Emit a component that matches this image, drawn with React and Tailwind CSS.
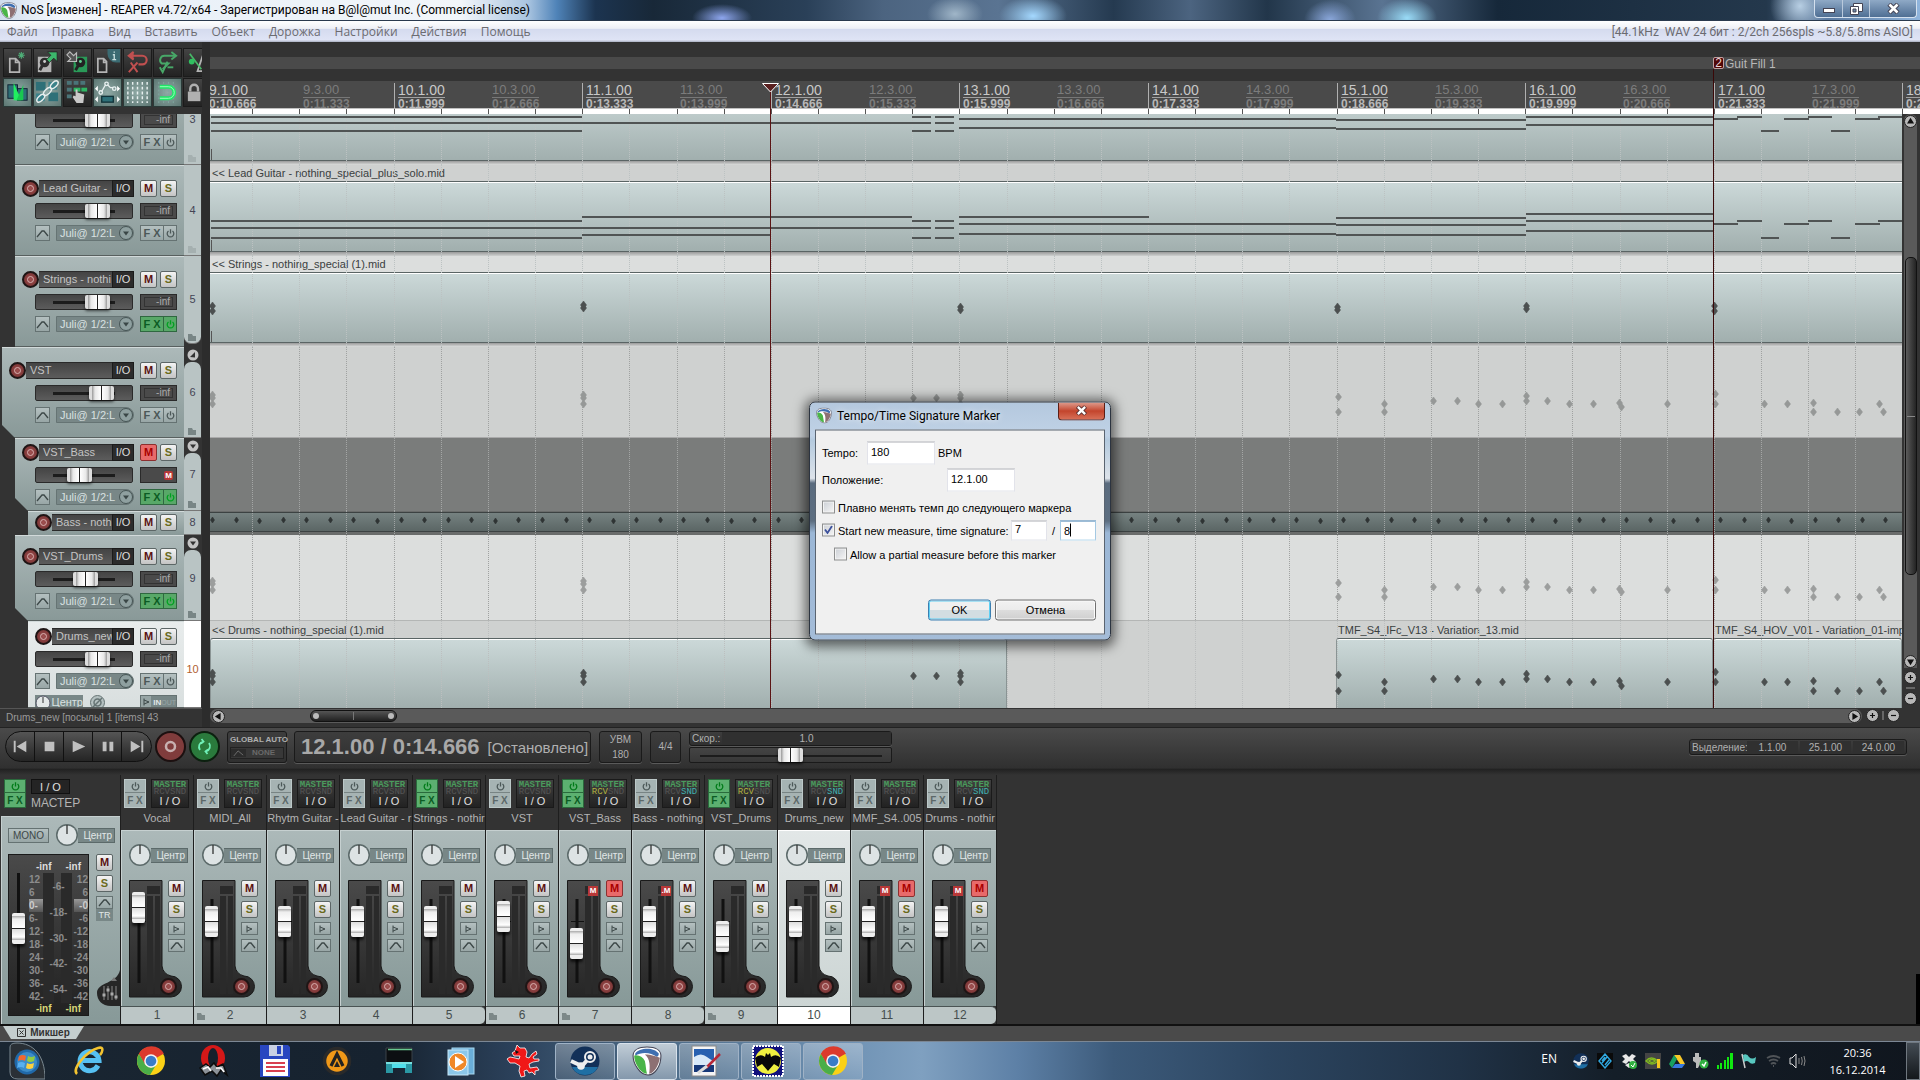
import React from "react";

/* ---------- data ---------- */

const TRACKS = [
  { n: 3, name: "Rhytm Guitar -", h: "h-[54px] -mt-[3px]", pt: "pt-0", level: 2, vol: 69, folder: "dim", headless: true },
  { n: 4, name: "Lead Guitar -", h: "h-[91px]", pt: "pt-[14px]", level: 2, vol: 69, folder: "dim" },
  { n: 5, name: "Strings - nothi", h: "h-[91px]", pt: "pt-[14px]", level: 2, vol: 69, fx: true, folder: "on", last: true },
  { n: 6, name: "VST", h: "h-[91px]", pt: "pt-[14px]", level: 1, vol: 75, folder: "on", arrow: "up", cut: true },
  { n: 7, name: "VST_Bass", h: "h-[73px]", pt: "pt-[5px]", level: 2, vol: 44, fx: true, muted: true, folder: "on", arrow: "down", cut: true },
  { n: 8, name: "Bass - noth", h: "h-[24px]", pt: "pt-[2px]", level: 3, vol: 69, slim: true },
  { n: 9, name: "VST_Drums", h: "h-[86px]", pt: "pt-[12px]", level: 2, vol: 52, fx: true, folder: "on", arrow: "down", cut: true },
  { n: 10, name: "Drums_new", h: "flex-1 min-h-0", pt: "pt-[6px]", level: 3, vol: 69, selected: true, extra: true },
];

const STRIPS = [
  { n: 1, name: "Vocal", v: 86 },
  { n: 2, name: "MIDI_All", v: 70, folder: true },
  { n: 3, name: "Rhytm Guitar -", v: 70 },
  { n: 4, name: "Lead Guitar - r", v: 70 },
  { n: 5, name: "Strings - nothir", v: 70, fx: true, end: true },
  { n: 6, name: "VST", v: 76, folder: true },
  { n: 7, name: "VST_Bass", v: 44, fx: true, rcv: true, folder: true, muted: true, led: "M" },
  { n: 8, name: "Bass - nothing", v: 70, snd: true, end: true, led: ".M" },
  { n: 9, name: "VST_Drums", v: 52, fx: true, rcv: true, folder: true },
  { n: 10, name: "Drums_new", v: 70, snd: true, selected: true },
  { n: 11, name: "MMF_S4..005", v: 70, muted: true, led: "M" },
  { n: 12, name: "Drums - nothir", v: 70, snd: true, muted: true, led: "M", end: true },
];

const MEASURES = [
  ["9", "0:10.666", "0:11.333"],
  ["10", "0:11.999", "0:12.666"],
  ["11", "0:13.333", "0:13.999"],
  ["12", "0:14.666", "0:15.333"],
  ["13", "0:15.999", "0:16.666"],
  ["14", "0:17.333", "0:17.999"],
  ["15", "0:18.666", "0:19.333"],
  ["16", "0:19.999", "0:20.666"],
  ["17", "0:21.333", "0:21.999"],
  ["18", "0:22.666", "0:23.333"],
];

const measureX = (i) => Math.round(i * 188.6 - 5);
const GRID = Array.from({ length: 60 }, (_, i) => Math.round(i * 47.15 - 5) + 0.5).filter((x) => x > 0);

const RIFF = [
  [1503, 1528, "a"], [1527, 1552, "b"], [1551, 1569, "c"], [1574, 1599, "a"],
  [1598, 1622, "b"], [1621, 1640, "c"], [1645, 1670, "a"], [1668, 1693, "b"],
];
const riff = (a, b, c) => RIFF.map(([x1, x2, k]) => [x1, x2, { a, b, c }[k]]);

const NOTES3 = [
  [1, 372, 43], [1, 721, 49], [1, 372, 57],
  [702, 721, 43], [725, 744, 43], [725, 744, 49], [702, 721, 57], [725, 744, 57],
  [749, 1126, 45], [749, 1126, 54], [1126, 1316, 46], [1126, 1316, 55],
  [1316, 1503, 43], [1316, 1503, 51], ...riff(45, 43, 57),
];
const NOTES4 = [
  [1, 372, 56], [1, 721, 63], [1, 372, 73], [372, 702, 52], [372, 560, 70],
  [702, 721, 56], [725, 744, 56], [725, 744, 63], [702, 721, 73], [725, 744, 73],
  [749, 939, 52], [749, 1126, 59], [749, 1126, 69],
  [1126, 1316, 53], [1126, 1316, 60], [1126, 1316, 70],
  [1316, 1503, 49], [1316, 1503, 56], [1316, 1503, 66], ...riff(59, 56, 73),
];
const HITS5 = [[2, 50], [2, 55], [373, 49], [373, 52], [750, 51], [750, 54], [1127, 51], [1127, 54], [1316, 50], [1316, 53], [1504, 50], [1504, 55]];
const DRUMS = [
  [2, 48], [2, 51], [2, 57], [373, 48], [373, 51], [373, 57], [703, 51], [726, 51], [750, 48], [750, 51], [750, 57],
  [1128, 50], [1128, 65], [1174, 57], [1174, 65], [1223, 54], [1247, 54], [1268, 57], [1292, 57],
  [1316, 49], [1316, 54], [1337, 54], [1359, 57], [1383, 57], [1409, 56], [1411, 60], [1457, 57],
  [1505, 47], [1505, 57], [1554, 57], [1577, 57], [1603, 56], [1603, 65], [1627, 65], [1649, 65], [1669, 57], [1673, 65],
];
const drums = (off, k) => DRUMS.map(([x, y]) => [x, Math.round(off + (y - 50) * k)]);
const BASS = Array.from({ length: 72 }, (_, i) => [Math.round(2 + i * 23.57), i % 5 === 2 ? 10 : 9]);

/* ---------- shared control styles ---------- */

const hThumb =
  "appearance-none bg-transparent block w-full h-full cursor-pointer [&::-webkit-slider-thumb]:appearance-none [&::-webkit-slider-thumb]:w-[25px] [&::-webkit-slider-thumb]:h-[14px] [&::-webkit-slider-thumb]:rounded-[2px] [&::-webkit-slider-thumb]:shadow-[0_2px_3px_rgba(0,0,0,0.6)] [&::-webkit-slider-thumb]:bg-[linear-gradient(90deg,#ddd_0,#ddd_3px,#999_3px,#e8e8e8_6px,#fff_12px,#222_12px,#222_13px,#fff_13px,#e8e8e8_19px,#999_22px,#ddd_22px,#ddd_25px)]";
const vThumb =
  "appearance-none bg-transparent block w-[13px] cursor-pointer [writing-mode:vertical-lr] [direction:rtl] [&::-webkit-slider-thumb]:appearance-none [&::-webkit-slider-thumb]:w-[13px] [&::-webkit-slider-thumb]:h-[31px] [&::-webkit-slider-thumb]:rounded-[2px] [&::-webkit-slider-thumb]:shadow-[0_3px_3px_rgba(0,0,0,0.7)] [&::-webkit-slider-thumb]:bg-[linear-gradient(180deg,#eee_0,#eee_3px,#aaa_3px,#eee_6px,#fff_15px,#222_15px,#222_16px,#ddd_16px,#fff_24px,#aaa_27px,#eee_27px,#eee_31px)]";
const msBase = "flex items-center justify-center w-[17px] h-[17px] rounded-[2px] border border-[#5c6666] text-[11px] leading-none font-bold bg-gradient-to-b from-[#f4f4f4] to-[#c4c4c4]";
const grayBtn = "flex items-center justify-center border border-[#657272] bg-gradient-to-b from-[#b4c0c0] to-[#98a6a6] text-[#3d4848]";

function Mute({ on, label }) {
  return (
    <button aria-label={label} className={on ? "flex items-center justify-center w-[17px] h-[17px] rounded-[2px] border border-[#8c3030] text-[11px] leading-none font-bold bg-[#e86a6a] text-[#a80000]" : msBase + " text-[#5a1212]"}>M</button>
  );
}
const Solo = () => <button className={msBase + " text-[#6a6a1c]"}>S</button>;

const Env = () => (
  <svg width="13" height="9" viewBox="0 0 13 9" fill="none" stroke="#3d4848" strokeWidth="1.3"><path d="M1 8L6 2L8 2L12 7" /></svg>
);
const Power = ({ c = "#4c5858" }) => (
  <svg width="9" height="9" viewBox="0 0 9 9" fill="none" stroke={c} strokeWidth="1.3"><path d="M2.5 2A3.3 3.3 0 1 0 6.5 2M4.5 .3V4.5" /></svg>
);
const Folder = ({ c }) => (
  <svg width="8" height="7" viewBox="0 0 8 7"><path d="M0 0H4L5 2H8V7H0Z" fill={c} /></svg>
);

/* ---------- title and menu ---------- */

const ReaperLogo = ({ s = 16 }) => (
  <svg width={s} height={s} viewBox="0 0 28 28">
    <path d="M14 1C22 1 27 4 27 9C27 18 22 27 15 27C7 27 1 16 1 9C1 4 6 1 14 1Z" fill="#fff" stroke="#445" strokeWidth="1" />
    <path d="M3 7C6 2 20 0 25 7C25 9 24 10 23 10C18 6 9 5 3 9Z" fill="#3f6fb0" />
    <path d="M2 9C6 8 10 10 12 14C13 18 13 22 14 26C7 25 2 15 2 9Z" fill="#4ab548" />
    <path d="M12 8C18 8 23 10 26 11C25 18 21 25 16 26C17 19 17 12 12 8Z" fill="#8d7073" />
  </svg>
);

function TitleBar() {
  return (
    <header className="h-[21px] shrink-0 flex items-center pl-0 border-b border-[#2a3a4e] bg-[radial-gradient(ellipse_30px_14px_at_722px_18px,#8ea6ee,transparent),radial-gradient(ellipse_34px_20px_at_1033px_16px,#a4d8ff,transparent),radial-gradient(ellipse_28px_18px_at_955px_14px,#a0b6c8,transparent),radial-gradient(ellipse_26px_20px_at_1330px_20px,#8ba8dc,transparent),radial-gradient(ellipse_30px_20px_at_1407px_18px,#9adcf8,transparent),radial-gradient(ellipse_30px_30px_at_1800px_6px,#b8cfe4,transparent),linear-gradient(90deg,#cfdded_0,#f4f7fb_3%,#eaf1f8_10%,#f2f6fa_24%,#a9c4e0_27.5%,#4f83b8_29%,#1c3450_31%,#182838_34%,#2a4058_42%,#4c6480_46%,#5a7492_52%,#253a50_58%,#4c6480_62%,#22364a_66%,#5a7492_72%,#16283a_78%,#24384c_92%,#5878a0_95%,#8fb4dc_100%)]">
      <ReaperLogo s={17} />
      <h1 className="pl-1 text-[12px] leading-[16px] text-black whitespace-nowrap font-['Roboto',sans-serif]">NoS [изменен] - REAPER v4.72/x64 - Зарегистрирован на B@l@mut Inc. (Commercial license)</h1>
      <div className="ml-auto mr-[3px] flex h-[18px] self-start rounded-b-[4px] border border-t-0 border-[#d4e0ee] overflow-hidden bg-gradient-to-b from-[#8fa9c6] to-[#4f6f94]">
        <button aria-label="Свернуть" className="w-[28px] flex items-end justify-center pb-1 border-r border-[#b9c9dc]"><span className="block w-[12px] h-[5px] bg-white border border-[#445]" /></button>
        <button aria-label="Восстановить" className="w-[27px] flex items-center justify-center border-r border-[#b9c9dc]">
          <svg width="13" height="12" viewBox="0 0 13 12" fill="#fff" stroke="#445" strokeWidth="1"><path d="M3.5 .5H12.500V8.500H3.500Z" /><path d="M.5 3.500H8.500V11.500H.5Z" /><path d="M3 6H6V9H3Z" fill="#6d89ab" /></svg>
        </button>
        <button aria-label="Закрыть" className="w-[46px] flex items-center justify-center">
          <svg width="13" height="11" viewBox="0 0 13 11"><path d="M2 1L11 10M11 1L2 10" stroke="#445" strokeWidth="4.600" /><path d="M2.500 1.500L10.500 9.500M10.500 1.500L2.500 9.500" stroke="#fff" strokeWidth="2.600" /></svg>
        </button>
      </div>
    </header>
  );
}

function MenuBar() {
  return (
    <nav className="h-[21px] shrink-0 flex items-center justify-between pl-[7px] pr-[7px] text-[12px] text-[#6b6b70] bg-[linear-gradient(180deg,#fff_0,#eef0f6_35%,#d5dbef_40%,#dfe4f5_90%,#a8aebf_100%)] font-['Open_Sans',sans-serif]">
      <div className="flex gap-[14px]">
        {["Файл", "Правка", "Вид", "Вставить", "Объект", "Дорожка", "Настройки", "Действия", "Помощь"].map((m) => (
          <button key={m} className="leading-[16px]">{m}</button>
        ))}
      </div>
      <span className="whitespace-pre leading-[16px] font-['Roboto',sans-serif]">[44.1kHz  WAV 24 бит : 2/2ch 256spls ~5.8/5.8ms ASIO]</span>
    </nav>
  );
}

/* ---------- toolbar ---------- */

const TOOLS = [
  { label: "Новый проект", art: <g fill="none" strokeWidth="1.8"><path d="M6 10H12L16 14V24H6ZM12 10V14H16" stroke="#b4b4b4" /><path d="M18 3V10M14.500 6.500H21.500M15.500 4L20.500 9M20.500 4L15.500 9" stroke="#4fae78" strokeWidth="1.2" /></g> },
  { label: "Открыть проект", art: <g fill="none"><rect x="4" y="8" width="14" height="16" fill="#b4b4b4" /><circle cx="11" cy="14" r="5" fill="#2d2d2d" /><path d="M11 13L6 22" stroke="#2d2d2d" strokeWidth="3" /><circle cx="11" cy="13" r="1.500" fill="#ccc" /><path d="M14 3H24V13L20.500 9.500L16 14L13 11L17.500 6.500Z" fill="#3cb86c" stroke="#222" strokeWidth=".8" /></g> },
  { label: "Сохранить проект", art: <g fill="none"><rect x="10" y="8" width="14" height="16" fill="#2a9a58" /><circle cx="17" cy="14" r="5" fill="#222" /><path d="M17 13L12 22" stroke="#222" strokeWidth="3" /><circle cx="17" cy="13" r="1.500" fill="#5fd090" /><path d="M3 6L6 3L10 7L13 4V13H4L7 10Z" fill="#555" stroke="#bbb" strokeWidth="1.200" /></g> },
  { label: "Настройки проекта", art: <g fill="none"><path d="M4 10H10L13 13V24H4ZM10 10V14H13" stroke="#b4b4b4" strokeWidth="1.800" /><path d="M27 0V14H23A9 9 0 0 1 14 5V0Z" fill="#3b6b72" /><path d="M19 11H23M21 11V6H19.500M21 2.500V4" stroke="#c6dede" strokeWidth="1.400" /></g> },
  { label: "Отменить", art: <g fill="none" stroke="#c05050" strokeWidth="2.200"><path d="M6 7H19A4.500 4.500 0 0 1 19 16H15" /><path d="M10 3L5 7L10 11" fill="#c05050" /><path d="M7 14L14 24M14 14L5 24" strokeWidth="2" /></g> },
  { label: "Повторить", art: <g fill="none" stroke="#48a868" strokeWidth="2"><path d="M22 7H11A4.500 4.500 0 0 0 8 15H15L9 21" /><path d="M18 3L23 7L18 11" /><path d="M6 19L9 24L14 13" /><path d="M14 19H20" /></g> },
  { label: "Метроном", art: <g fill="none"><path d="M14 23H25L20 5Z" stroke="#b4b4b4" strokeWidth="1.800" /><path d="M6 5L18 21" stroke="#48b868" strokeWidth="1.800" /><circle cx="8" cy="13" r="3" fill="#30c060" /></g> },
];
const TOOLS2 = [
  { on: true, label: "Автокроссфейд", art: <g><rect x="4" y="6" width="10" height="14" fill="#2e6f76" stroke="#123" /><rect x="14" y="10" width="10" height="12" fill="#2e6f76" stroke="#123" /><path d="M10 4L18 22H10Z" fill="#20f060" /><path d="M20 6L13 22H20Z" fill="#18c850" /></g> },
  { on: true, label: "Группировка", art: <g><rect x="2" y="3" width="10" height="9" fill="#2e7078" /><rect x="15" y="14" width="10" height="9" fill="#2e7078" /><rect x="15" y="3" width="9" height="8" fill="#3b828a" /><rect x="2" y="15" width="9" height="8" fill="#3b828a" /><g fill="none" stroke="#e8eeee" strokeWidth="1.500"><ellipse cx="7" cy="20" rx="5" ry="2.600" transform="rotate(-45 7 20)" /><ellipse cx="14" cy="13" rx="5" ry="2.600" transform="rotate(-45 14 13)" /><ellipse cx="21" cy="6" rx="5" ry="2.600" transform="rotate(-45 21 6)" /></g></g> },
  { on: false, label: "Режим правки", art: <g><g fill="#4a7478"><rect x="3" y="2" width="5" height="4" /><rect x="10" y="2" width="5" height="4" /><rect x="17" y="2" width="5" height="4" /><rect x="3" y="9" width="5" height="4" /><rect x="3" y="16" width="5" height="4" /></g><rect x="10" y="9" width="7" height="4" fill="#2fb564" /><rect x="18" y="9" width="6" height="4" fill="#2fb564" /><path d="M12 11V18L10 17L9 19L13 25H20L21 16L14 14V11Z" fill="#c9c9c9" /></g> },
  { on: true, label: "Огибающие", art: <g fill="none" stroke="#e8f0f0" strokeWidth="1.400"><path d="M8 13L12 6M14 6L17 9H20" /><circle cx="7" cy="14" r="1.800" /><circle cx="13" cy="5" r="1.800" /><circle cx="21" cy="10" r="1.800" /><rect x="8" y="18" width="12" height="6" fill="#2e7078" stroke="#12343a" /><path d="M4 7L1 10L4 13ZM24 7L27 10L24 13ZM4 18L1 21L4 24ZM24 18L27 21L24 24Z" fill="#fff" stroke="none" /></g> },
  { on: true, label: "Сетка", art: <g stroke="#e8f0f0" strokeWidth="1.500" strokeDasharray="3 2"><path d="M4 3V25M9 3V25M14 3V25M19 3V25M24 3V25" /></g> },
  { on: true, label: "Привязка", art: <g fill="none"><path d="M5 3V25M10 3V25M15 3V25M20 3V25" stroke="#7fa8a0" strokeWidth="1" strokeDasharray="2 2" /><path d="M6 8H15A6 6 0 0 1 15 20H6" stroke="#20e868" strokeWidth="4" /><path d="M6 8H15A6 6 0 0 1 15 20H6" stroke="#a0ffc0" strokeWidth="1" /></g> },
  { on: false, label: "Блокировка", art: <g><rect x="4" y="13" width="13" height="10" fill="#b0b0b0" /><path d="M6.500 13V10A4 4 0 0 1 14.500 10V13" fill="none" stroke="#b0b0b0" strokeWidth="2.500" /></g> },
];

function Toolbar() {
  const row = (items) => (
    <div className="flex h-[30px] gap-px">
      {items.map((t) => (
        <button key={t.label} aria-label={t.label} className={t.on ? "w-[29px] h-[29px] shrink-0 border border-[#2a3a38] bg-[radial-gradient(circle,#90aaa6,#5c7672)]" : "w-[29px] h-[29px] shrink-0 border border-[#1b1b1b] bg-gradient-to-b from-[#444] to-[#232323]"}>
          <svg width="27" height="27" viewBox="0 0 28 28">{t.art}</svg>
        </button>
      ))}
    </div>
  );
  return (
    <div className="h-[72px] shrink-0 pt-[6px] pl-[3px] overflow-hidden bg-[#333]">
      {row(TOOLS)}
      {row(TOOLS2)}
    </div>
  );
}

/* ---------- track control panel ---------- */

const INDENT = { 1: "ml-[2px]", 2: "ml-[15px]", 3: "ml-[28px]" };

const RecArm = () => (
  <button aria-label="Запись" className="w-[17px] h-[17px] shrink-0 rounded-full border-2 border-[#1f1515] bg-[radial-gradient(circle,#a05050,#6e2c2c)] flex items-center justify-center">
    <span className="block w-[7px] h-[7px] rounded-full border border-[#d8b0b0]" />
  </button>
);

function TrackPanel({ t }) {
  const bg = t.selected ? "bg-gradient-to-b from-[#e8ecec] to-[#d9dfdf]" : t.headless ? "bg-gradient-to-b from-[#9cabaa] to-[#899998]" : "bg-gradient-to-b from-[#acb9b9] to-[#899998]";
  const cut = t.cut ? "[clip-path:polygon(0_0,100%_0,100%_100%,13px_100%,0_calc(100%-13px))]" : "";
  return (
    <li className={"flex shrink-0 overflow-hidden " + t.h}>
      <div className={["flex-1 min-w-0 overflow-hidden border-t border-[#d2dada] flex flex-col gap-[6px] pl-[7px] pr-[7px]", t.slim ? "" : "border-b border-b-[#58605f]", INDENT[t.level], t.pt, bg, cut].join(" ")}>
        {!t.headless && (
          <div className="flex h-[17px] shrink-0">
            <RecArm />
            <span className="flex-1 min-w-0 overflow-hidden whitespace-nowrap bg-gradient-to-b from-[#444] to-[#5c5c5c] border-y border-[#2a2a2a] text-[#c4c4c4] text-[11px] leading-[15px] pl-[4px]">{t.name}</span>
            <button className="w-[22px] shrink-0 bg-[#2c2c2c] text-[#ddd] text-[11px] leading-[15px] border border-[#1b1b1b]">I/O</button>
            <div className="flex gap-[3px] ml-[6px]"><Mute on={t.muted} label={"Mute " + t.name} /><Solo /></div>
          </div>
        )}
        {!t.slim && (
          <>
            <div className="flex justify-end gap-[7px] h-4 shrink-0">
              <div className="w-[98px] h-4 rounded-[2px] border border-[#2a2a2a] [background:linear-gradient(#1c1c1c,#1c1c1c)_17px_6px/62px_3px_no-repeat,linear-gradient(#444,#5c5c5c)]">
                <input type="range" aria-label={"Громкость " + t.name} defaultValue={t.vol} className={hThumb} />
              </div>
              <div className="w-[37px] h-4 border border-[#2a2a2a] bg-[#4a4a4a] flex items-center justify-end px-[3px] text-[#aaa] text-[10px] leading-none">
                {t.muted ? <span className="bg-[#b83838] text-white font-bold text-[8px] px-px rounded-[2px] leading-[9px]">M</span> : <span className="w-full h-[10px] border border-[#333] text-right pr-0.5 leading-[8px]">-inf</span>}
              </div>
            </div>
            <div className="flex justify-end h-4 shrink-0">
              <button aria-label="Огибающие" className={grayBtn + " w-[15px] h-4 mr-[6px]"}><Env /></button>
              <button className="w-[78px] h-4 flex items-center justify-between pl-[3px] bg-[#788787] border border-[#667474] rounded-r-full text-[#d9e1e1] text-[11px] leading-none mr-[6px]">
                Juli@ 1/2:L
                <svg width="14" height="14" viewBox="0 0 14 14"><circle cx="7" cy="7" r="6.500" fill="#8fa0a0" stroke="#465454" /><path d="M4 5.500H10L7 9.500Z" fill="#3a4646" /></svg>
              </button>
              <div className={"flex w-[37px] h-4 border " + (t.fx ? "bg-[#58a868] border-[#2f6840]" : "bg-gradient-to-b from-[#b4c0c0] to-[#98a6a6] border-[#657272]")}>
                <button className={"w-[23px] text-[11px] leading-[14px] font-bold whitespace-pre border-r " + (t.fx ? "text-[#0c5c24] border-[#2f6840]" : "text-[#4c5858] border-[#657272]")}>F X</button>
                <button aria-label="FX вкл" className="flex-1 flex items-center justify-center"><Power c={t.fx ? "#00a020" : "#4c5858"} /></button>
              </div>
            </div>
          </>
        )}
        {t.extra && (
          <div className="flex justify-end items-start h-4 shrink-0 text-[11px] leading-[14px]">
            <span className="w-[49px] h-4 bg-[#788787] text-[#d9e1e1] flex"><svg width="16" height="16" viewBox="0 0 16 16"><circle cx="8" cy="8" r="7" fill="#e4e8e8" stroke="#556" /><path d="M8 2V8" stroke="#333" /></svg><span className="pl-px">Центр</span></span>
            <button aria-label="Фаза" className="ml-[7px] mr-[35px]"><svg width="15" height="15" viewBox="0 0 15 15" fill="none" stroke="#667474"><circle cx="7.500" cy="7.500" r="7" fill="#b4c0c0" /><circle cx="7.500" cy="7.500" r="3.500" strokeWidth="1.500" /><path d="M3 12L12 3" strokeWidth="1.500" /></svg></button>
            <span className="w-[37px] h-4 bg-[#98a6a6] border border-[#657272] flex text-[8px] font-bold text-[#e0e6e6]"><span className="w-[13px] pt-[2px] flex justify-center"><svg width="7" height="8" viewBox="0 0 7 8"><path d="M1 .5V7.500M1 2L6 4L1 6" fill="none" stroke="#3d4848" /></svg></span><span className="bg-[#788787] flex-1 flex pl-[2px]">IN<span className="text-[#98a6a6] font-normal text-[7px]">OUT</span></span></span>
          </div>
        )}
      </div>
      <div className="w-[18px] shrink-0 bg-[#333] pr-px flex flex-col">
        {t.arrow && (
          <button aria-label="Папка" className="h-[15px] shrink-0 flex items-center justify-center">
            <svg width="12" height="12" viewBox="0 0 12 12"><circle cx="6" cy="6" r="5.500" fill="#c4c4c4" /><path d={t.arrow === "up" ? "M3 8L8 3V8.500Z" : "M3 4.500H9L6 8.500Z"} fill="#333" /></svg>
          </button>
        )}
        <div className={["flex-1 relative flex justify-center text-[11px] border-b border-[#777]", t.headless ? "items-start pt-0" : "items-center", t.arrow ? "rounded-t-[7px]" : "", t.last ? "rounded-b-[7px] mb-[3px]" : "", t.selected ? "bg-white text-[#b06030] pt-[10px]" : "bg-[#b9c4c4] text-[#445]"].join(" ")}>
          <span className={t.arrow ? "mb-[14px]" : ""}>{t.n}</span>
          {t.folder && <span className="absolute left-[4px] bottom-[2px]"><Folder c={t.folder === "on" ? "#788585" : "#a5b0b0"} /></span>}
        </div>
      </div>
    </li>
  );
}

/* ---------- arrange view ---------- */

function Ruler() {
  return (
    <div className="h-[72px] shrink-0 relative overflow-hidden bg-[#333]">
      <div className="h-[15px]" />
      <div className="h-[12px] bg-[#4a4a4a]" />
      <div className="h-[12px]" />
      <div className="h-[28px] bg-[#4a4a4a] border-b border-[#c0c0c0]" />
      <div className="h-[5px] bg-white" />
      <svg className="absolute left-0 bottom-0 w-full h-[5px]">{GRID.map((x) => <path key={x} d={`M${x} 0V5`} stroke="#555" />)}</svg>
      {MEASURES.map(([m, a, b], i) => (
        <React.Fragment key={m}>
          <div className="absolute top-[41px] h-[26px] border-l border-[#b0b0b0] pl-[3px] text-[#c8c8c8] whitespace-nowrap" style={{ left: measureX(i) }}>
            <div className="text-[14px] leading-[14px] border-b border-[#a0a0a0]">{m}.1.00</div>
            <div className="text-[12px] leading-[12px] font-bold text-[#b8b8b8]">{a}</div>
          </div>
          <div className="absolute top-[41px] text-[#7c7c7c] whitespace-nowrap" style={{ left: measureX(i) + 98 }}>
            <div className="text-[13px] leading-[14px] border-b border-[#777]">{m}.3.00</div>
            <div className="text-[12px] leading-[12px] font-bold">{b}</div>
          </div>
        </React.Fragment>
      ))}
      <div className="absolute left-[1503px] top-[15px] flex text-[12px] leading-[14px] text-[#b8b8b8] whitespace-nowrap">
        <span className="w-[11px] h-[12px] rounded-[2px] border border-[#c0a0a0] bg-[#500808] text-[#e8d8d8] text-center leading-[11px]">2</span>
        <span className="pl-px">Guit Fill 1</span>
      </div>
    </div>
  );
}

const Grid = ({ c }) => GRID.map((x) => <path key={x} d={`M${x} 0V200`} stroke={c} strokeDasharray="1 1" />);
const Bars = ({ notes }) => notes.map(([a, b, y], i) => <rect key={i} x={a} y={y - 1} width={b - a} height="2" fill="#505454" />);
const Hits = ({ notes, c, r = 4, dx = 0 }) => notes.map(([x, y], i) => <path key={i} d={`M${x + dx - r + 1} ${y}L${x + dx} ${y - r}L${x + dx + r - 1} ${y}L${x + dx} ${y + r}Z`} fill={c} stroke={c} strokeWidth=".6" />);

const clipBody = "flex-1 border-y border-t-[#5a6464] border-b-[#5a6464] bg-gradient-to-b from-[#ccd9d9] to-[#a1afae] shadow-[inset_0_1px_0_#fff]";

function Lane({ h, bg, label, grid, full, children, mid }) {
  return (
    <div className={"relative shrink-0 flex flex-col overflow-hidden " + h + " " + bg}>
      {full && (
        <>
          <div className="h-[16px] shrink-0 pl-[2px] text-[11px] leading-[16px] text-[#3a4040] whitespace-nowrap">{label}</div>
          <div className={clipBody} />
          <div className="h-[4px] shrink-0 bg-gradient-to-b from-[#999] to-transparent" />
        </>
      )}
      {mid}
      <svg className="absolute inset-0 w-full h-full"><Grid c={grid} />{children}</svg>
    </div>
  );
}

function Lanes() {
  const clip = "h-full flex flex-col overflow-hidden";
  const body = "flex-1 rounded-t-[3px] border-t border-t-[#5a6464] border-x border-x-[#8a9494] bg-gradient-to-b from-[#ccd9d9] to-[#a1afae] shadow-[inset_0_1px_0_#fff]";
  const label = "h-[17px] shrink-0 pl-[2px] text-[11px] leading-[18px] text-[#3a4040] whitespace-nowrap";
  const start = <path d="M1.500 75V86" stroke="#555" />;
  return (
    <div className="relative flex-1 min-h-0 overflow-hidden flex flex-col">
      <Lane h="h-[91px] -mt-10" bg="bg-[#dcdedd]" full grid="#bcc2c2"><Bars notes={NOTES3} />{start}</Lane>
      <Lane h="h-[91px]" bg="bg-[#cfd1d0]" full label="<< Lead Guitar - nothing_special_plus_solo.mid" grid="#bcc2c2"><Bars notes={NOTES4} />{start}</Lane>
      <Lane h="h-[91px]" bg="bg-[#dcdedd]" full label="<< Strings - nothing_special (1).mid" grid="#bcc2c2"><Hits notes={HITS5} c="#4c5050" dx={0.5} />{start}</Lane>
      <Lane h="h-[91px]" bg="bg-[#cfd1d0] border-b border-[#aaa]" grid="#a0a2a1"><Hits notes={drums(50, 1)} c="#969897" dx={0.5} /></Lane>
      <Lane h="h-[73px]" bg="bg-[#7a7c7b]" grid="#a4a6a5" />
      <Lane h="h-[24px]" bg="bg-[#6a6c6b]" grid="#a0a4a4" mid={<div className="mt-px h-[20px] border-y border-[#3c4242] bg-gradient-to-b from-[#768281] to-[#5b6665]" />}><Hits notes={BASS} c="#2f3434" r={3} dx={0.5} /></Lane>
      <Lane h="h-[86px]" bg="bg-[#dcdedd] border-b border-[#b4b6b5]" grid="#a0a2a1"><Hits notes={drums(48, 0.93)} c="#9c9e9d" dx={0.5} /></Lane>
      <Lane
        h="flex-1 min-h-0"
        bg="bg-[#cfd1d0]"
        grid="#bcbfbf"
        mid={
          <div className="flex flex-1 min-h-0">
            <div className={clip + " w-[797px] shrink-0"}><div className={label}>{"<< Drums - nothing_special (1).mid"}</div><div className={body} /></div>
            <div className="w-[329px] shrink-0" />
            <div className={clip + " w-[377px] shrink-0"}><div className={label}>TMF_S4_IFc_V13 - Variation_13.mid</div><div className={body} /></div>
            <div className={clip + " flex-1 min-w-0"}><div className={label}>TMF_S4_HOV_V01 - Variation_01-impo</div><div className={body} /></div>
          </div>
        }
      >
        <Hits notes={drums(54, 1.07)} c="#4c5050" dx={0.5} />
      </Lane>
    </div>
  );
}

const Round = ({ d, label }) => (
  <button aria-label={label} className="block shrink-0">
    <svg width="13" height="13" viewBox="0 0 13 13"><circle cx="6.500" cy="6.500" r="6" fill="#b8b8b8" stroke="#222" /><path d={d} fill="#111" stroke="#111" strokeWidth="1.200" /></svg>
  </button>
);

function Arrange() {
  return (
    <section className="flex-1 min-w-0 flex flex-col border-l-8 border-[#2c2c2c]">
      <div className="relative flex-1 min-h-0 flex flex-col">
        <Ruler />
        <div className="flex flex-1 min-h-0">
          <Lanes />
          <div className="w-[18px] shrink-0 bg-[#333] pl-[2px] pr-[3px] flex flex-col items-center">
            <div className="flex-1 w-full bg-[#5a5a5a] flex flex-col items-center pt-[1px] rounded-t-full">
              <Round label="Вверх" d="M4 8L6.500 4L9 8Z" />
              <div className="mt-[129px] w-[12px] h-[318px] rounded-[5px] border border-[#111] bg-gradient-to-r from-[#5c5c5c] to-[#242424] flex items-center justify-center"><span className="block w-[8px] h-px bg-[#888]" /></div>
              <div className="flex-1" />
              <Round label="Вниз" d="M4 5L6.500 9L9 5Z" />
            </div>
            <div className="pt-[3px]"><Round label="Увеличить" d="M6.500 4V9M4 6.500H9" /></div>
            <div className="w-[9px] h-[2px] bg-[#666] my-[3px]" />
            <div className="pb-[3px]"><Round label="Уменьшить" d="M4 6.500H9" /></div>
          </div>
        </div>
        <div className="absolute left-[560px] top-[42px] bottom-0 w-px bg-[#5a1414]" />
        <svg className="absolute left-[552px] top-[41px]" width="17" height="10" viewBox="0 0 17 10"><path d="M.5 .5H16.500L8.500 9Z" fill="#5a2020" stroke="#fff" /></svg>
        <div className="absolute left-[1503px] top-[27px] bottom-0 w-px bg-[#3a0808]" />
      </div>
      <div className="h-[19px] shrink-0 bg-[#333] pt-[1px] pr-[20px] flex items-start">
        <div className="flex-1 h-[14px] bg-[#5a5a5a] flex items-center pl-[2px] pr-px rounded-l-full rounded-r-full">
          <Round label="Влево" d="M8 4L4 6.500L8 9Z" />
          <div className="ml-[85px] w-[87px] h-[12px] rounded-full border border-[#111] bg-gradient-to-b from-[#555] to-[#222] flex items-center justify-between px-[2px]">
            <span className="w-[6px] h-[6px] rounded-full bg-[#bbb]" /><span className="w-px h-[8px] bg-[#777]" /><span className="w-[6px] h-[6px] rounded-full bg-[#bbb]" />
          </div>
          <div className="flex-1" />
          <Round label="Вправо" d="M5 4L9 6.500L5 9Z" />
        </div>
        <div className="flex items-center pl-[4px] gap-[3px]"><Round label="Увеличить по горизонтали" d="M6.500 4V9M4 6.500H9" /><span className="w-[2px] h-[9px] bg-[#666]" /><Round label="Уменьшить по горизонтали" d="M4 6.500H9" /></div>
      </div>
    </section>
  );
}

/* ---------- transport ---------- */

const inset = "rounded-[3px] border border-[#1a1a1a] shadow-[0_1px_0_#5a5a5a] bg-gradient-to-b from-[#3d3d3d] to-[#303030]";

function Transport() {
  const btns = [
    ["В начало", "M8 9H10V21H8ZM21 9V21L11 15Z"],
    ["Стоп", "M10 10H20V20H10Z"],
    ["Играть", "M9 9L22 15L9 21Z"],
    ["Пауза", "M10 10H14V20H10ZM17 10H21V20H17Z"],
    ["В конец", "M9 9L19 15L9 21ZM20 9H22V21H20Z"],
  ];
  return (
    <section className="h-[48px] shrink-0 flex items-start pt-[3px] pl-[5px] bg-[linear-gradient(180deg,#4a4a4a,#303030_85%,#222_88%,#333)] border-t border-[#222] text-[#b0b0b0]">
      <div className="flex rounded-full overflow-hidden border border-[#111] bg-gradient-to-b from-[#555] to-[#252525] divide-x divide-[#111]">
        {btns.map(([l, d]) => (
          <button key={l} aria-label={l} className="w-[29px] h-[29px]"><svg width="29" height="29" viewBox="0 0 30 30"><path d={d} fill="#c0c0c0" /></svg></button>
        ))}
      </div>
      <button aria-label="Запись" className="ml-[3px]"><svg width="31" height="31" viewBox="0 0 31 31"><circle cx="15.500" cy="15.500" r="14.500" fill="#803c3c" stroke="#1c1010" strokeWidth="2" /><circle cx="15.500" cy="15.500" r="4.500" fill="none" stroke="#c8b0b0" strokeWidth="2.500" /></svg></button>
      <button aria-label="Повтор" className="ml-[3px]"><svg width="31" height="31" viewBox="0 0 31 31" fill="none"><circle cx="15.500" cy="15.500" r="14.500" fill="#2a7a3c" stroke="#0c200f" strokeWidth="2" /><path d="M11 19A5.500 5.500 0 0 1 14 10.500M20 12A5.500 5.500 0 0 1 17 20.500M12 12.500L14.500 10.500L12.500 8M19 18.500L16.500 20.500L18.500 23" stroke="#70f0b8" strokeWidth="1.800" /></svg></button>
      <div className={inset + " ml-[7px] w-[60px] h-[32px] px-[2px] text-center font-bold"}>
        <div className="text-[8px] leading-[15px] whitespace-nowrap">GLOBAL AUTO</div>
        <button className="w-full h-[12px] border border-[#222] bg-[#383838] flex items-center gap-[6px] text-[8px] text-[#6a6a6a]"><span className="w-[15px] bg-[#2c2c2c] flex justify-center"><svg width="11" height="8" viewBox="0 0 13 9" fill="none" stroke="#777"><path d="M1 8L6 2L12 7" /></svg></span>NONE</button>
      </div>
      <div className={inset + " ml-[7px] w-[297px] h-[32px] pl-[6px] flex items-center whitespace-nowrap"}>
        <span className="text-[22px] leading-none font-bold text-[#a8a8a8]">12.1.00 / 0:14.666</span>
        <span className="text-[15px] leading-none pl-[8px]">[Остановлено]</span>
      </div>
      <div className={inset + " ml-[8px] w-[43px] h-[32px] text-center text-[10px] leading-[15px]"}><div>УВМ</div><div>180</div></div>
      <div className={inset + " ml-[8px] w-[31px] h-[32px] text-center text-[10px] leading-[30px]"}>4/4</div>
      <div className="ml-[8px] w-[203px]">
        <div className={inset + " h-[15px] flex text-[10px] leading-[13px]"}><label htmlFor="rate" className="pl-[2px] w-[32px]">Скор.:</label><span className="flex-1 text-center bg-[#303030]">1.0</span></div>
        <div className="mt-px h-[16px] rounded-[2px] border border-[#1a1a1a] [background:linear-gradient(#1c1c1c,#1c1c1c)_10px_7px/182px_2px_no-repeat,linear-gradient(#444,#383838)]"><input id="rate" type="range" defaultValue="50" className={hThumb} /></div>
      </div>
      <div className={inset + " ml-auto mr-[13px] mt-[8px] h-[16px] w-[218px] flex gap-[2px] items-center text-[10px] leading-[13px] pr-[2px] pl-[2px]"}>
        <span className="w-[53px]">Выделение:</span>
        {["1.1.00", "25.1.00", "24.0.00"].map((v) => <span key={v} className="flex-1 text-center bg-[#303030]">{v}</span>)}
      </div>
    </section>
  );
}

/* ---------- mixer ---------- */

function FxBlock({ on }) {
  return (
    <div className={"w-[22px] h-[29px] border flex flex-col " + (on ? "bg-[#5cb070] border-[#2a6a3c]" : "bg-[#a6b3b3] border-[#bcc8c8]")}>
      <button aria-label="FX вкл" className={"h-[13px] flex items-center justify-center border-b " + (on ? "border-[#2a6a3c]" : "border-[#788484]")}><Power c={on ? "#007a18" : "#4c5858"} /></button>
      <button className={"flex-1 text-[10px] font-bold leading-[13px] whitespace-pre " + (on ? "text-[#0c5c24]" : "text-[#5c6868]")}>F X</button>
    </div>
  );
}

function Pan() {
  return (
    <div className="flex items-center h-[24px]">
      <svg width="24" height="24" viewBox="0 0 24 24" className="shrink-0"><circle cx="12" cy="12" r="11" fill="#5c6a6a" /><circle cx="12" cy="12" r="9.500" fill="#dde3e4" /><path d="M12 2V11" stroke="#222" strokeWidth="1.200" /></svg>
      <span className="h-[15px] w-[37px] bg-[#788787] border-y border-r border-[#5c6a6a] text-[10px] leading-[13px] text-[#e2e8e8] text-right pr-[2px] -ml-[1px]">Центр</span>
    </div>
  );
}

function Strip({ s }) {
  return (
    <article className="w-[73px] shrink-0 flex flex-col border-r border-[#1e1e1e]">
      <div className="h-[55px] bg-[#333] pt-[4px]">
        <div className="flex gap-[5px] px-[3px]">
          <FxBlock on={s.fx} />
          <button className="w-[38px] h-[29px] border border-[#1a1a1a] bg-gradient-to-b from-[#404040] to-[#222] text-center font-['Liberation_Mono',monospace] text-[9px] leading-[7px] pt-px">
            <span className="block text-[#4a9a5c] font-bold">MASTER</span>
            <span className="block"><span className={s.rcv ? "text-[#b0b040]" : "text-[#555]"}>RCV</span><span className={s.snd ? "text-[#40b0b0]" : "text-[#555]"}>SND</span></span>
            <span className="block text-[11px] leading-[11px] text-[#e0e0e0] font-['Liberation_Sans',sans-serif] whitespace-pre">I / O</span>
          </button>
        </div>
        <h2 className="text-[11px] leading-[21px] text-[#b4b4b4] flex justify-center whitespace-nowrap">{s.name}</h2>
      </div>
      <div className={"flex-1 border-t border-l " + (s.selected ? "border-white bg-gradient-to-b from-[#e2e7e7] to-[#ccd5d4]" : "border-[#c6d0d0] bg-gradient-to-b from-[#acb9b9] to-[#879998]")}>
        <div className="pl-[6px] pt-[12px]"><Pan /></div>
        <div className="grid pl-[7px] pt-[13px] h-[132px]">
          <svg className="col-start-1 row-start-1" width="60" height="118" viewBox="0 0 60 118">
            <defs><linearGradient id="fp" x2="0" y2="1"><stop offset="0" stopColor="#4a4a4a" /><stop offset="1" stopColor="#262626" /></linearGradient></defs>
            <path d="M.5 .5H33V86Q34 94 42 96A10.500 10.500 0 0 1 42 117H.5Z" fill="url(#fp)" stroke="#1a1a1a" />
            <path d="M18 6H31V14H18ZM18 16H24V114H18ZM26 16H31V114H26Z" fill="#2a2a2a" />
            <path d="M10 19V103" stroke="#111" strokeWidth="3" /><path d="M4 41.500H17" stroke="#111" />
          </svg>
          <div className="col-start-1 row-start-1 flex justify-between pr-[8px]">
            <div className="flex pl-[3px]">
              <input type="range" aria-label={"Громкость " + s.name} defaultValue={s.v} className={vThumb + " h-[117px]"} />
              {s.led && <span className="mt-[6px] ml-[5px] w-[10px] h-[10px] bg-[#b83838] text-white text-[8px] leading-[10px] text-center font-bold">{s.led}</span>}
            </div>
            <div className="flex flex-col w-[17px]">
              <Mute on={s.muted} label={"Mute " + s.name} />
              <div className="mt-[4px]"><Solo /></div>
              <button aria-label="Монитор" className={grayBtn + " w-[17px] h-[13px] mt-[4px]"}><svg width="7" height="8" viewBox="0 0 7 8"><path d="M1 .5V7.500M1 2L6 4L1 6" fill="none" stroke="#3d4848" /></svg></button>
              <button aria-label="Огибающие" className={grayBtn + " w-[17px] h-[13px] mt-[4px]"}><Env /></button>
              <div className="mt-[26px] -ml-[8px]"><RecArm /></div>
            </div>
          </div>
        </div>
      </div>
      <footer className={"relative h-[18px] border-t border-[#4a5454] text-[12px] leading-[17px] text-center text-[#454d4d] " + (s.selected ? "bg-white" : "bg-[#bcc6c6]") + (s.end ? " rounded-r-[5px]" : "")}>
        {s.n}
        {s.folder && <span className="absolute left-[3px] bottom-[4px]"><Folder c="#7c8888" /></span>}
      </footer>
    </article>
  );
}

function Master() {
  const side = ["12", "6", "0", "6", "12", "18", "24", "30", "36", "42"];
  return (
    <article className="w-[121px] shrink-0 flex flex-col border-r border-[#1e1e1e] pl-px">
      <div className="h-[41px] bg-[#333] pt-[4px] pl-[3px] flex gap-[5px]">
        <FxBlock on />
        <div>
          <button className="block w-[39px] h-[15px] border border-[#111] bg-[#242424] text-[11px] leading-[12px] text-[#e0e0e0] whitespace-pre">I / O</button>
          <h2 className="text-[12px] leading-[18px] text-[#b4b4b4]">МАСТЕР</h2>
        </div>
      </div>
      <div className="flex-1 border-t border-l border-[#c6d0d0] bg-gradient-to-b from-[#acb9b9] to-[#879998] pl-[6px] pt-[6px]">
        <div className="flex items-center gap-[6px]">
          <button className={grayBtn + " w-[41px] h-[15px] text-[10px]"}>MONO</button>
          <Pan />
        </div>
        <div className="flex pt-[7px]">
          <div className="w-[81px] h-[162px] border border-[#1a1a1a] bg-gradient-to-b from-[#4a4a4a] to-[#222] flex text-[10px] text-[#8c8c8c]">
            <div className="pl-[3px] pt-[18px] w-[20px] shrink-0"><div className="[background:linear-gradient(#111,#111)_center_0/3px_130px_no-repeat] w-[13px]"><input type="range" aria-label="Громкость МАСТЕР" defaultValue="60" className={vThumb + " h-[130px]"} /></div></div>
            <div className="flex-1 flex flex-col">
              <div className="flex justify-around text-[#ddd] font-bold leading-[12px] pt-[6px]"><span>-inf</span><span>-inf</span></div>
              <div className="flex-1 flex justify-between font-bold leading-[13px] bg-[linear-gradient(90deg,transparent_14px,#2a2a2a_14px,#2a2a2a_25px,transparent_25px,transparent_32px,#2a2a2a_32px,#2a2a2a_43px,transparent_43px)]">
                <div className="flex flex-col justify-between">{side.map((v, i) => <span key={i} className={i === 2 ? "bg-gradient-to-b from-[#999] to-[#555] text-[#ccc]" : ""}>{v}{i > 1 ? "-" : ""}</span>)}</div>
                <div className="flex flex-col justify-between py-[7px]">{["-6-", "-18-", "-30-", "-42-", "-54-"].map((v) => <span key={v} className="text-center">{v}</span>)}</div>
                <div className="flex flex-col justify-between text-right">{side.map((v, i) => <span key={i} className={i === 2 ? "bg-gradient-to-b from-[#999] to-[#555] text-[#ccc]" : ""}>{i > 1 ? "-" : ""}{v}</span>)}</div>
              </div>
              <div className="flex justify-around text-[#d8d878] font-bold leading-[11px] pb-[2px]"><span>-inf</span><span>-inf</span></div>
            </div>
          </div>
          <div className="flex-1 flex flex-col items-start pl-[7px]">
            <Mute label="Mute МАСТЕР" />
            <div className="mt-[4px]"><Solo /></div>
            <button aria-label="Огибающие" className={grayBtn + " w-[17px] h-[13px] mt-[4px]"}><Env /></button>
            <button className="w-[17px] h-[12px] bg-[#788787] text-[#e2e8e8] text-[9px] leading-[12px]">TR</button>
            <svg className="mt-auto self-end mb-[10px]" width="23" height="36" viewBox="0 0 23 36"><path d="M23 0V36H14C5 36 0 30 0 23C0 12 20 14 23 0Z" fill="#262626" /><path d="M14 11L17 7L20 11Z" fill="#777" /><path d="M7 16V30M11 16V30M15 16V30M19 16V30" stroke="#888" /><path d="M5.500 25H8.500M9.500 20H12.500M13.500 24H16.500M17.500 27H20.500" stroke="#aaa" strokeWidth="3" /></svg>
          </div>
        </div>
      </div>
    </article>
  );
}

/* ---------- dialog ---------- */

function Dialog() {
  const field = "bg-white border border-[#e2e3ea] border-t-[#abadb3] px-[3px] pb-[3px] text-[11px] text-black outline-none";
  const check = "appearance-none w-[13px] h-[13px] shrink-0 border border-[#8e8f8f] bg-[linear-gradient(135deg,#cbcfd5,#f6f6f6)] shadow-[inset_0_0_0_1px_#f4f4f4] bg-center bg-no-repeat";
  return (
    <div role="dialog" aria-labelledby="dlg" className="absolute left-1/2 top-1/2 -translate-x-1/2 -translate-y-1/2 w-[302px] h-[239px] rounded-[6px] border border-[#2c3440] shadow-[0_2px_12px_4px_rgba(0,0,0,0.55)] bg-[linear-gradient(180deg,#b4c8de_0,#c0d2e6_14%,#b4cade_16%,#dde3ea_32%,#5a6b7e_34%,#5d6e80_50%,#9bb7d6_55%,#a4bcd8_100%)] p-[5px] pt-0 flex flex-col">
      <div className="flex h-[27px] shrink-0 items-center pl-px">
        <ReaperLogo s={16} />
        <h2 id="dlg" className="pl-[5px] flex-1 text-[12px] leading-[16px] whitespace-nowrap font-['Roboto',sans-serif] [text-shadow:0_0_6px_#fff]">Tempo/Time Signature Marker</h2>
        <button aria-label="Закрыть" className="self-start w-[47px] h-[18px] rounded-b-[4px] border border-t-0 border-[#5c1d14] bg-gradient-to-b from-[#dc9a8c] via-[#c3442c] to-[#d87058] flex items-center justify-center">
          <svg width="13" height="10" viewBox="0 0 13 11"><path d="M2 1L11 10M11 1L2 10" stroke="#5a3030" strokeWidth="4.600" /><path d="M2.500 1.500L10.500 9.500M10.500 1.500L2.500 9.500" stroke="#fff" strokeWidth="2.600" /></svg>
        </button>
      </div>
      <form className="flex-1 border border-[#5a6470] bg-[#f0f0f0] text-[11px] leading-[14px] text-black pl-[6px] pr-[8px] pt-[11px]" onSubmit={(e) => e.preventDefault()}>
        <div className="flex items-center h-[23px]"><label htmlFor="tempo" className="w-[45px]">Tempo:</label><input id="tempo" defaultValue="180" className={field + " w-[68px] h-[23px]"} /><span className="pl-[3px]">BPM</span></div>
        <div className="flex items-center h-[23px] mt-[4px]"><label htmlFor="pos" className="w-[125px]">Положение:</label><input id="pos" defaultValue="12.1.00" className={field + " w-[68px] h-[23px]"} /></div>
        <div className="flex items-center h-[14px] mt-[9px] whitespace-nowrap"><input id="c1" type="checkbox" className={check} /><label htmlFor="c1" className="pl-[3px]">Плавно менять темп до следующего маркера</label></div>
        <div className="flex items-center h-[20px] mt-[6px] whitespace-nowrap">
          <span className="relative flex">
            <input id="c2" type="checkbox" defaultChecked className={check} />
            <svg className="absolute left-[2px] top-[2px] pointer-events-none" width="9" height="9" viewBox="0 0 9 9"><path d="M1 4L3.500 7.500L8 .5" fill="none" stroke="#3c509c" strokeWidth="1.800" /></svg>
          </span>
          <label htmlFor="c2" className="pl-[3px] flex-1">Start new measure, time signature:</label>
          <input aria-label="Числитель" defaultValue="7" className={field + " w-[36px] h-[20px] pb-0"} /><span className="px-[5px]">/</span>
          <span className="w-[36px] h-[20px] bg-white border border-[#3d7bad] border-x-[#a4c9e3] border-b-[#b7d9ed] flex items-center"><input aria-label="Знаменатель" defaultValue="8" className="w-[9px] pl-[3px] h-[14px] bg-transparent text-[11px] text-black outline-none" /><span className="w-px h-[13px] bg-black" /></span>
        </div>
        <div className="flex items-center h-[14px] mt-[7px] pl-[12px] whitespace-nowrap"><input id="c3" type="checkbox" className={check} /><label htmlFor="c3" className="pl-[3px]">Allow a partial measure before this marker</label></div>
        <div className="flex justify-end gap-[4px] mt-[38px]">
          <button className="w-[63px] h-[21px] rounded-[3px] border border-[#3c7fb1] shadow-[inset_0_0_0_1px_#5fd0f4] bg-[linear-gradient(180deg,#f0f0f0_50%,#d2dde2_50%)]">OK</button>
          <button className="w-[101px] h-[21px] rounded-[3px] border border-[#707070] shadow-[inset_0_0_0_1px_#fcfcfc] bg-[linear-gradient(180deg,#f2f2f2,#ebebeb_50%,#dddddd_50%,#cfcfcf)]">Отмена</button>
        </div>
      </form>
    </div>
  );
}

/* ---------- taskbar ---------- */

const Chrome = () => (
  <svg width="30" height="30" viewBox="0 0 30 30"><circle cx="15" cy="15" r="14" fill="#fbd116" /><path d="M15 15L2.900 8A14 14 0 0 1 27.100 8Z" fill="#dc3a2c" /><path d="M15 8H28A14 14 0 0 0 2.900 8L9 19Z" fill="#dc3a2c" /><path d="M2.900 8A14 14 0 0 0 14 29L20 19L15 22L9 18Z" fill="#4aae48" /><circle cx="15" cy="15" r="6.800" fill="#f4f4f4" /><circle cx="15" cy="15" r="5.300" fill="#3a7cc8" /></svg>
);
const Steam = ({ s = 30 }) => (
  <svg width={s} height={s} viewBox="0 0 30 30"><circle cx="15" cy="15" r="14.500" fill="#123058" /><path d="M2 21A14.500 14.500 0 0 0 28 21Z" fill="#1f6fa4" /><path d="M1 15L12 20L19 12" stroke="#eee" strokeWidth="4" fill="none" /><circle cx="20" cy="11" r="5" fill="#123058" stroke="#eee" strokeWidth="2" /><circle cx="20" cy="11" r="2.500" fill="#eee" /><circle cx="11" cy="20" r="3.800" fill="#eee" /></svg>
);
const PINNED = [
  ["Internet Explorer", <svg width="32" height="32" viewBox="0 0 32 32" fill="none"><path d="M25 20.500A9.500 9.500 0 1 1 26 15.500H9" stroke="#56c0f2" strokeWidth="5" /><path d="M4 29C-2 24 14 6 25 3C32 1 29 8 27 10" stroke="#f4c430" strokeWidth="2.600" /></svg>],
  ["Chrome", <Chrome />],
  ["Opera", <svg width="32" height="34" viewBox="0 0 32 34"><ellipse cx="16" cy="14" rx="12" ry="13" fill="#d41818" /><ellipse cx="16" cy="14" rx="5" ry="10" fill="#15202c" /><path d="M3 24L9 20L13 23L17 19L20 23L26 20L30 31L24 26L20 32L15 27L8 31Z" fill="#8c9298" stroke="#0c0c0c" strokeWidth="1.500" /><path d="M6 25L11 23L14 27M19 24L24 24L27 28" stroke="#fff" strokeWidth="1.500" fill="none" /></svg>],
  ["Сохранение", <svg width="32" height="34" viewBox="0 0 32 34"><path d="M1 1H29L31 3V33H1Z" fill="#2846c0" /><rect x="10" y="1" width="14" height="11" fill="#c8d0e4" /><rect x="18" y="2" width="4" height="8" fill="#2846c0" /><rect x="4" y="15" width="25" height="17" fill="#fff" /><path d="M7 19H26M7 23H26M7 27H26" stroke="#d84050" strokeWidth="2" /></svg>],
  ["AIMP", <svg width="30" height="30" viewBox="0 0 30 30"><circle cx="15" cy="15" r="12.500" fill="#f09818" stroke="#2a2a2a" strokeWidth="3.500" /><path d="M9 20L15 8L21 20" fill="none" stroke="#222" strokeWidth="3.200" /><path d="M12 21L15 15L18 21Z" fill="#222" /></svg>],
  ["Папка", <svg width="32" height="30" viewBox="0 0 32 30"><path d="M3 2H29V17H3Z" fill="#0c0f12" stroke="#3a4248" /><path d="M5 3.500H29" stroke="#68c890" strokeWidth="1.500" /><path d="M3 16H29V27H22V22H10V27H3Z" fill="#2a98a4" /><path d="M3 16H29V18H3Z" fill="#78e0e0" /><path d="M9 18H23V22H9Z" fill="#50e0ec" /></svg>],
  ["Медиаплеер", <svg width="28" height="30" viewBox="0 0 28 30"><rect x="5" y="2" width="22" height="26" fill="#6aaed8" stroke="#a8d8f0" /><rect x="1" y="4" width="20" height="25" fill="#8cc8ea" stroke="#c8e8f8" /><circle cx="11" cy="16" r="9" fill="#f08828" stroke="#fff" /><path d="M8 10L17 16L8 22Z" fill="#fff" /></svg>],
  ["Irfan", <svg width="34" height="34" viewBox="0 0 34 34"><path d="M11 1L14 4L19 4L21 8L20 13L23 14L26 10L30 7L31 10L27 13L28 15H33V17L27 18L23 20L24 24L31 23L33 26L29 27V31L26 28L23 29L21 26L18 27L19 32L15 33L13 27L14 22L9 19H4L1 15L4 13L9 14L13 15L14 12L8 12L6 9L9 7Z" fill="#f01818" stroke="#fff" strokeWidth=".8" /><path d="M9 6L13 8L10 10Z" fill="#111" /></svg>],
];
const RUNNING = [
  ["Steam", <Steam />],
  ["REAPER", <ReaperLogo s={30} />, true],
  ["Paint", <svg className="mr-[8px]" width="32" height="32" viewBox="0 0 32 32"><rect x="3" y="1" width="24" height="30" fill="#f4f4f4" stroke="#888" /><rect x="5" y="4" width="20" height="23" fill="#2860b0" /><path d="M5 12Q12 7 18 12T25 14V20H5Z" fill="#d8e8f8" /><path d="M5 20H25V27H5Z" fill="#173878" /><path d="M31 9L17 23" stroke="#b82838" strokeWidth="2.500" /><path d="M18 21L9 28" stroke="#ddd" strokeWidth="3" /></svg>],
  ["The Bat!", <svg className="mr-[6px]" width="32" height="32" viewBox="0 0 32 32"><rect x="1" y="1" width="30" height="30" fill="#10107c" stroke="#fff" strokeWidth="2" strokeDasharray="2 1" /><circle cx="16" cy="16" r="13" fill="#f0f040" /><path d="M3 13Q8 8 13 12L14 8L16 10L18 8L19 12Q24 8 29 13L27 22L22 19L16 26L10 19L5 22Z" fill="#080808" /></svg>],
  ["Google Chrome", <Chrome />],
];

function Tray() {
  const w = "w-[24px] flex justify-center";
  return (
    <div className="flex items-center">
      <span className={w}><Steam s={16} /></span>
      <span className={w}><svg width="16" height="16" viewBox="0 0 16 16"><rect width="16" height="16" fill="#0a0a0a" /><path d="M2 8L8 1L14 8L8 15ZM5 8L8 4M5 10L10 4M8 12L12 7" fill="none" stroke="#30a8e0" strokeWidth="1.400" /></svg></span>
      <span className={w}><svg width="17" height="16" viewBox="0 0 17 16"><path d="M1 3L5 1L8 4L11 1L15 3L12 6L15 9L11 11L8 8L5 11L1 9L4 6ZM4 12L8 10L12 12L8 15Z" fill="#e8e8e8" /><circle cx="12" cy="12" r="4" fill="#30b040" /><path d="M10 12L12 14L14 10" stroke="#fff" fill="none" /></svg></span>
      <span className={w}><svg width="16" height="16" viewBox="0 0 16 16"><rect width="16" height="16" fill="#444" /><path d="M1 8Q6 2 13 8Q7 14 1 8ZM4 8Q7 5 10 8Q7 11 4 8Z" fill="none" stroke="#80b820" strokeWidth="1.500" /><rect x="12" y="6" width="3" height="9" fill="#f4c820" /></svg></span>
      <span className={w}><svg width="16" height="15" viewBox="0 0 16 15"><path d="M5 1H11L16 10H11Z" fill="#f8c828" /><path d="M5 1L8 5L3 14L0 10Z" fill="#18a060" /><path d="M3 14L6 10H16L13 14Z" fill="#3878e0" /></svg></span>
      <span className={w}><svg width="16" height="16" viewBox="0 0 16 16"><path d="M2 0H6V4H8V9L5 15H3V10L0 8V4H2Z" fill="#bbb" /><circle cx="11" cy="11" r="4.500" fill="#30b040" /><path d="M9 11L11 13L13 9" stroke="#fff" strokeWidth="1.500" fill="none" /></svg></span>
      <span className={w}><svg width="16" height="16" viewBox="0 0 16 16" fill="#10e810"><path d="M0 12H2V16H0ZM3 10H5V16H3ZM7 7H9V16H7ZM10 4H12V16H10ZM13 0H16V16H13Z" /></svg></span>
      <span className={w}><svg width="16" height="16" viewBox="0 0 16 16"><path d="M1 1L4 15" stroke="#ccc" strokeWidth="1.500" /><path d="M2 2Q6 0 8 4Q11 7 15 4L14 10Q10 12 8 9Q6 7 3 9Z" fill="#58c8c0" /></svg></span>
      <span className={w}><svg width="15" height="12" viewBox="0 0 15 12" fill="none" stroke="#505458" strokeWidth="1.800"><path d="M1 3Q7.500 -1 14 3M3 6Q7.500 3 12 6M5 9Q7.500 7 10 9M7 11H8" /></svg></span>
      <span className={w}><svg width="17" height="16" viewBox="0 0 17 16" fill="none" stroke="#ddd"><path d="M1 5H3L7 1V15L3 11H1Z" /><path d="M10 5V11M12.500 4Q14 8 12.500 12M15 3Q17 8 15 13" stroke="#888" /></svg></span>
    </div>
  );
}

function Taskbar() {
  return (
    <footer className="h-[39px] shrink-0 flex items-center border-t border-[#7c8794] bg-[linear-gradient(90deg,#1a2632_0,#16222f_20%,#2c425c_27%,#486580_33%,#6f92b4_44%,#7fa0c0_48%,#5d80a6_53%,#3c5a7a_58%,#2c4560_66%,#203246_76%,#141e28_84%,#10161e_100%)] font-['Open_Sans',sans-serif]">
      <button aria-label="Пуск" className="w-[58px] flex justify-center pr-[4px]">
        <svg width="36" height="38" viewBox="0 0 36 38"><path d="M1 5Q1 1 8 1C24 1 36 13 36 37H9Q1 37 1 30Z" fill="#2a3036" stroke="#7a8890" /><circle cx="18" cy="20" r="12.500" fill="#2068a8" /><circle cx="18" cy="20" r="10" fill="#3c8cc8" /><path d="M10 14Q14 12 17 14L16 19Q13 17 9 19Z" fill="#f06830" /><path d="M19 14Q22 16 26 14L25 19Q21 21 18 19Z" fill="#90cc40" /><path d="M9 21Q12 19 16 21L15 26Q12 24 8 26Z" fill="#58b0f0" /><path d="M18 21Q21 23 25 21L24 26Q20 28 17 26Z" fill="#fcd040" /></svg>
      </button>
      {PINNED.map(([l, icon]) => <button key={l} aria-label={l} className="w-[62px] flex justify-center">{icon}</button>)}
      <div className="flex gap-[2px] pl-px">
        {RUNNING.map(([l, icon, active]) => (
          <button key={l} aria-label={l} className={"w-[60px] h-[37px] rounded-[3px] border flex items-center justify-center " + (active ? "border-[#d8e2ec] bg-gradient-to-b from-[#c0ccd6] to-[#8498ac]" : "border-[#9fb2c6] bg-gradient-to-b from-white/30 to-white/10")}>{icon}</button>
        ))}
      </div>
      <div className="ml-auto flex items-center text-white">
        <span className="text-[12px] pr-[12px] pb-[4px]">EN</span>
        <Tray />
        <div className="w-[97px] text-center text-[11px] leading-[17px]"><div>20:36</div><div>16.12.2014</div></div>
        <button aria-label="Показать рабочий стол" className="w-[14px] h-[38px] border border-[#707880] bg-gradient-to-b from-[#444c54] to-[#14181c]" />
      </div>
    </footer>
  );
}

/* ---------- page ---------- */

export default function App() {
  return (
    <div className="h-screen w-full flex flex-col overflow-hidden bg-[#333] font-['Liberation_Sans',Arial,sans-serif]">
      <main className="relative flex-1 min-h-0 flex flex-col">
        <TitleBar />
        <MenuBar />
        <div className="flex flex-1 min-h-0">
          <aside className="w-[202px] shrink-0 flex flex-col">
            <Toolbar />
            <ul className="flex-1 min-h-0 flex flex-col overflow-hidden">{TRACKS.map((t) => <TrackPanel key={t.n} t={t} />)}</ul>
            <div className="h-[19px] shrink-0 border-t border-[#555] pl-[6px] text-[10px] leading-[17px] text-[#9a9a9a] whitespace-nowrap">Drums_new [посылы] 1 [items] 43</div>
          </aside>
          <Arrange />
        </div>
        <Transport />
        <section className="h-[249px] shrink-0 flex">
          <Master />
          {STRIPS.map((s) => <Strip key={s.n} s={s} />)}
          <div className="ml-auto mt-auto w-[4px] h-[50px] bg-black" />
        </section>
        <div className="h-[17px] shrink-0 bg-[#4a4a4a] border-t-2 border-[#111] pl-[3px]">
          <button className="h-[13px] w-[81px] flex items-center justify-center gap-[4px] bg-[#c4cece] text-[#333] text-[10px] leading-[13px] font-bold [clip-path:polygon(0_0,100%_0,calc(100%-8px)_100%,8px_100%)]">
            <svg width="9" height="9" viewBox="0 0 9 9" fill="none" stroke="#333"><path d="M.5 .5H8.500V8.500H.5ZM2.500 2.500L6.500 6.500M6.500 2.500L2.500 6.500" /></svg>
            Микшер
          </button>
        </div>
        <Dialog />
      </main>
      <Taskbar />
    </div>
  );
}
